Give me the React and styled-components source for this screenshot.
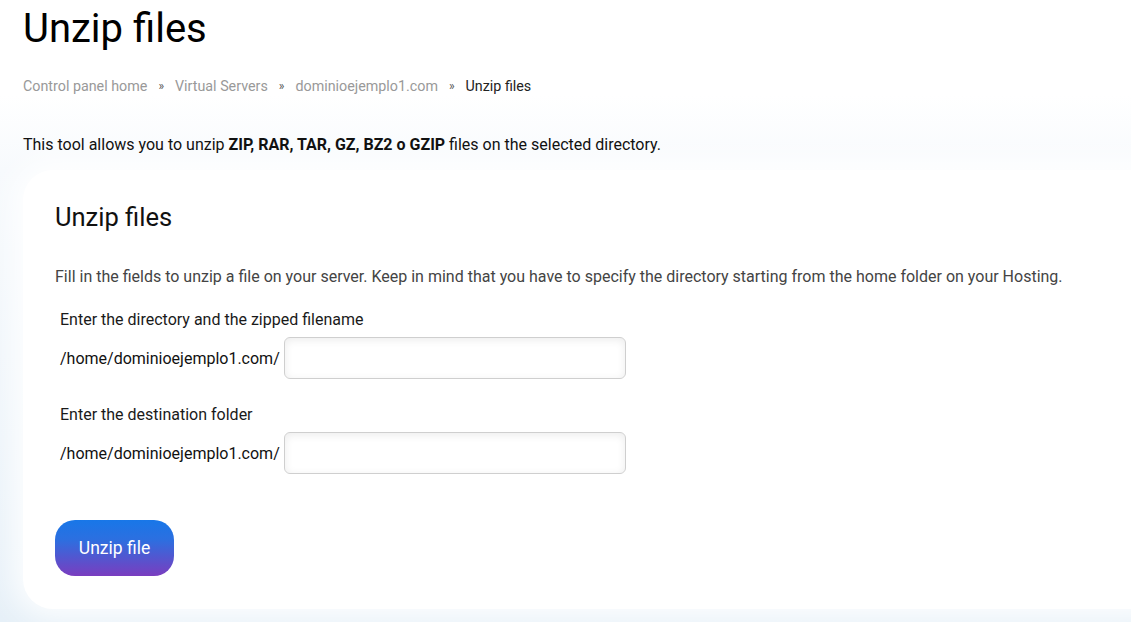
import React from 'react'
import styled, { createGlobalStyle } from 'styled-components'

const GlobalStyle = createGlobalStyle`
  html, body {
    margin: 0;
    padding: 0;
  }
  body {
    font-family: Roboto, "Liberation Sans", sans-serif;
    color: #111;
    overflow: hidden;
    min-height: 622px;
    background: linear-gradient(to bottom, #ffffff 0px, #ffffff 95px, #f7fafd 170px, #e6f0f8 622px);
  }
`

const Page = styled.div`
  padding: 0 0 13px 23px;
`

const Title = styled.h1`
  margin: 0;
  padding-top: 6px;
  font-size: 40px;
  font-weight: 400;
  line-height: 46px;
  color: #000;
`

const Crumbs = styled.nav`
  display: flex;
  align-items: center;
  gap: 11px;
  margin-top: 24px;
  font-size: 14.3px;
  line-height: 20px;
  color: #999;
`

const Crumb = styled.span`
  color: ${p => (p.$current ? '#222' : '#999')};
`

const Sep = styled.span`
  color: #555;
  font-size: 12px;
`

const Intro = styled.p`
  margin: 38px 0 0;
  font-size: 16px;
  line-height: 22px;
  color: #111;
  b { font-weight: 700; }
`

const Card = styled.section`
  margin-top: 14px;
  margin-right: -40px;
  background: #fff;
  border-radius: 30px;
  padding: 30px 32px 33px;
  box-shadow: 0 0 30px 10px rgba(255, 255, 255, 0.9);
`

const CardTitle = styled.h2`
  margin: 0;
  font-size: 25.5px;
  font-weight: 400;
  line-height: 34px;
  color: #111;
`

const Lead = styled.p`
  margin: 33px 0 0;
  font-size: 16px;
  line-height: 20px;
  color: #444;
`

const Field = styled.div`
  margin-top: ${p => p.$top}px;
  padding-left: 5px;
`

const Label = styled.div`
  font-size: 16px;
  line-height: 20px;
  color: #1a1a1a;
`

const Row = styled.div`
  display: flex;
  align-items: center;
  gap: 4px;
  margin-top: 7px;
  font-size: 16px;
  color: #111;
`

const Input = styled.input`
  width: 342px;
  height: 42px;
  box-sizing: border-box;
  border: 1px solid #cfcfcf;
  border-radius: 6px;
  background: #fff;
  box-shadow: inset 0 2px 8px rgba(0, 0, 0, 0.08);
  font: inherit;
  padding: 0 10px;
  outline: none;
`

const Button = styled.button`
  margin-top: 46px;
  width: 119px;
  height: 56px;
  border: none;
  border-radius: 20px;
  background: linear-gradient(to bottom, #1877e8 0%, #2c6fe0 35%, #7a3dbf 100%);
  color: #fff;
  font-family: Roboto, "Liberation Sans", sans-serif;
  font-size: 17.5px;
  cursor: pointer;
`

export default function App() {
  return (
    <>
      <GlobalStyle />
      <Page>
        <Title>Unzip files</Title>
        <Crumbs>
          <Crumb>Control panel home</Crumb>
          <Sep>»</Sep>
          <Crumb>Virtual Servers</Crumb>
          <Sep>»</Sep>
          <Crumb>dominioejemplo1.com</Crumb>
          <Sep>»</Sep>
          <Crumb $current>Unzip files</Crumb>
        </Crumbs>
        <Intro>
          This tool allows you to unzip <b>ZIP, RAR, TAR, GZ, BZ2 o GZIP</b> files on the selected directory.
        </Intro>
        <Card>
          <CardTitle>Unzip files</CardTitle>
          <Lead>
            Fill in the fields to unzip a file on your server. Keep in mind that you have to specify the directory starting from the home folder on your Hosting.
          </Lead>
          <Field $top={23}>
            <Label>Enter the directory and the zipped filename</Label>
            <Row>
              <span>/home/dominioejemplo1.com/</span>
              <Input type="text" />
            </Row>
          </Field>
          <Field $top={26}>
            <Label>Enter the destination folder</Label>
            <Row>
              <span>/home/dominioejemplo1.com/</span>
              <Input type="text" />
            </Row>
          </Field>
          <Button>Unzip file</Button>
        </Card>
      </Page>
    </>
  )
}
